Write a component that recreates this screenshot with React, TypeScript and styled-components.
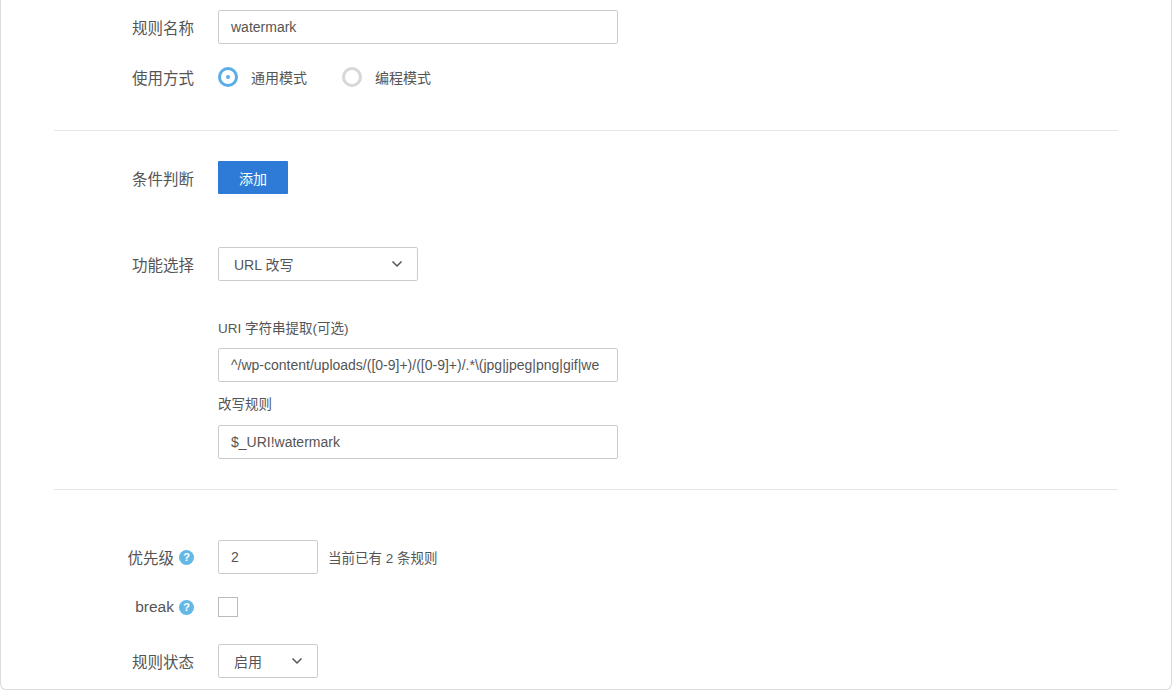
import React from 'react';
import styled, { createGlobalStyle } from 'styled-components';

const Global = createGlobalStyle`
  body { margin: 0; background: #fff; font-family: "Liberation Sans", "Noto Sans CJK SC", sans-serif; font-size: 14px; color: #555; }
`;

const Card = styled.div`
  width: 1172px;
  height: 690px;
  box-sizing: border-box;
  border: 1px solid #dcdcdc;
  border-top: none;
  border-radius: 0 0 6px 6px;
  padding: 10px 53px 0 52px;
  overflow: hidden;
`;

const Section = styled.div<{ $pt?: number; $pb?: number }>`
  padding: ${p => p.$pt ?? 0}px 0 ${p => p.$pb ?? 0}px;
  display: flex;
  flex-direction: column;
`;

const Divider = styled.div`
  height: 1px;
  background: #e6e6e6;
  margin-left: 1px;
`;

const Row = styled.div<{ $mb?: number; $h?: number }>`
  display: flex;
  align-items: center;
  min-height: ${p => p.$h ?? 34}px;
  margin-bottom: ${p => p.$mb ?? 0}px;
`;

const Label = styled.div`
  width: 141px;
  padding-right: 24px;
  display: flex;
  justify-content: flex-end;
  align-items: center;
  gap: 5px;
  font-size: 15.5px;
  color: #555;
`;

const Control = styled.div<{ $row?: boolean }>`
  display: flex;
  flex-direction: ${p => (p.$row ? 'row' : 'column')};
  align-items: ${p => (p.$row ? 'center' : 'stretch')};
  flex: 1;
`;

const Input = styled.div<{ $w: number }>`
  width: ${p => p.$w}px;
  height: 34px;
  box-sizing: border-box;
  border: 1px solid #ccc;
  border-radius: 2px;
  padding: 0 12px;
  display: flex;
  align-items: center;
  color: #555;
  white-space: nowrap;
  overflow: hidden;
`;

const Select = styled(Input)`
  justify-content: space-between;
  padding: 0 14px 0 15px;
`;

const RadioItem = styled.label`
  display: flex;
  align-items: center;
  gap: 13px;
  margin-right: 35px;
  font-size: 14px;
  color: #555;
`;

const RadioDot = styled.span<{ $on?: boolean }>`
  width: 14px;
  height: 14px;
  border-radius: 50%;
  border: 3px solid ${p => (p.$on ? '#5aaee8' : '#d5d7d8')};
  display: flex;
  align-items: center;
  justify-content: center;
  &::after {
    content: '';
    width: 4px;
    height: 4px;
    border-radius: 50%;
    background: ${p => (p.$on ? '#5aaee8' : 'transparent')};
  }
`;

const Button = styled.button`
  width: 70px;
  height: 33px;
  border: none;
  border-radius: 1px;
  background: #2d7bd6;
  color: #fff;
  font-size: 14px;
  font-family: inherit;
`;

const SubLabel = styled.div`
  font-size: 13.5px;
  color: #555;
  margin: 0 0 11px;
`;

const Help = styled.span`
  width: 15px;
  height: 15px;
  border-radius: 50%;
  background: #64b8e6;
  color: #fff;
  font-size: 11px;
  font-weight: bold;
  display: inline-flex;
  align-items: center;
  justify-content: center;
`;

const Hint = styled.span`
  margin-left: 10px;
  font-size: 13.5px;
`;

const Checkbox = styled.span`
  width: 20px;
  height: 20px;
  box-sizing: border-box;
  border: 1px solid #bbb;
`;

const Chevron = () => (
  <svg width="12" height="8" viewBox="0 0 12 8">
    <path d="M1.5 1.5 L6 6 L10.5 1.5" fill="none" stroke="#555" strokeWidth="1.5" />
  </svg>
);

export default function App() {
  return (
    <Card>
      <Global />
      <Section $pb={36}>
        <Row $mb={16}>
          <Label>规则名称</Label>
          <Control><Input $w={400}>watermark</Input></Control>
        </Row>
        <Row>
          <Label>使用方式</Label>
          <Control $row>
            <RadioItem><RadioDot $on />通用模式</RadioItem>
            <RadioItem><RadioDot />编程模式</RadioItem>
          </Control>
        </Row>
      </Section>
      <Divider />
      <Section $pt={30} $pb={30}>
        <Row $mb={53} $h={33}>
          <Label>条件判断</Label>
          <Control><Button>添加</Button></Control>
        </Row>
        <Row $mb={36}>
          <Label>功能选择</Label>
          <Control><Select $w={200}>URL 改写<Chevron /></Select></Control>
        </Row>
        <Row>
          <Label />
          <Control>
            <SubLabel>URI 字符串提取(可选)</SubLabel>
            <Input $w={400} style={{ padding: '0 0 0 12px' }}>^/wp-content/uploads/([0-9]+)/([0-9]+)/.*\(jpg|jpeg|png|gif|we</Input>
            <SubLabel style={{ margin: '11px 0 12px' }}>改写规则</SubLabel>
            <Input $w={400}>$_URI!watermark</Input>
          </Control>
        </Row>
      </Section>
      <Divider />
      <Section $pt={50}>
        <Row $mb={23}>
          <Label>优先级<Help>?</Help></Label>
          <Control $row>
            <Input $w={100}>2</Input>
            <Hint>当前已有 2 条规则</Hint>
          </Control>
        </Row>
        <Row $mb={27} $h={20}>
          <Label>break<Help>?</Help></Label>
          <Control><Checkbox /></Control>
        </Row>
        <Row>
          <Label>规则状态</Label>
          <Control><Select $w={100}>启用<Chevron /></Select></Control>
        </Row>
      </Section>
    </Card>
  );
}
